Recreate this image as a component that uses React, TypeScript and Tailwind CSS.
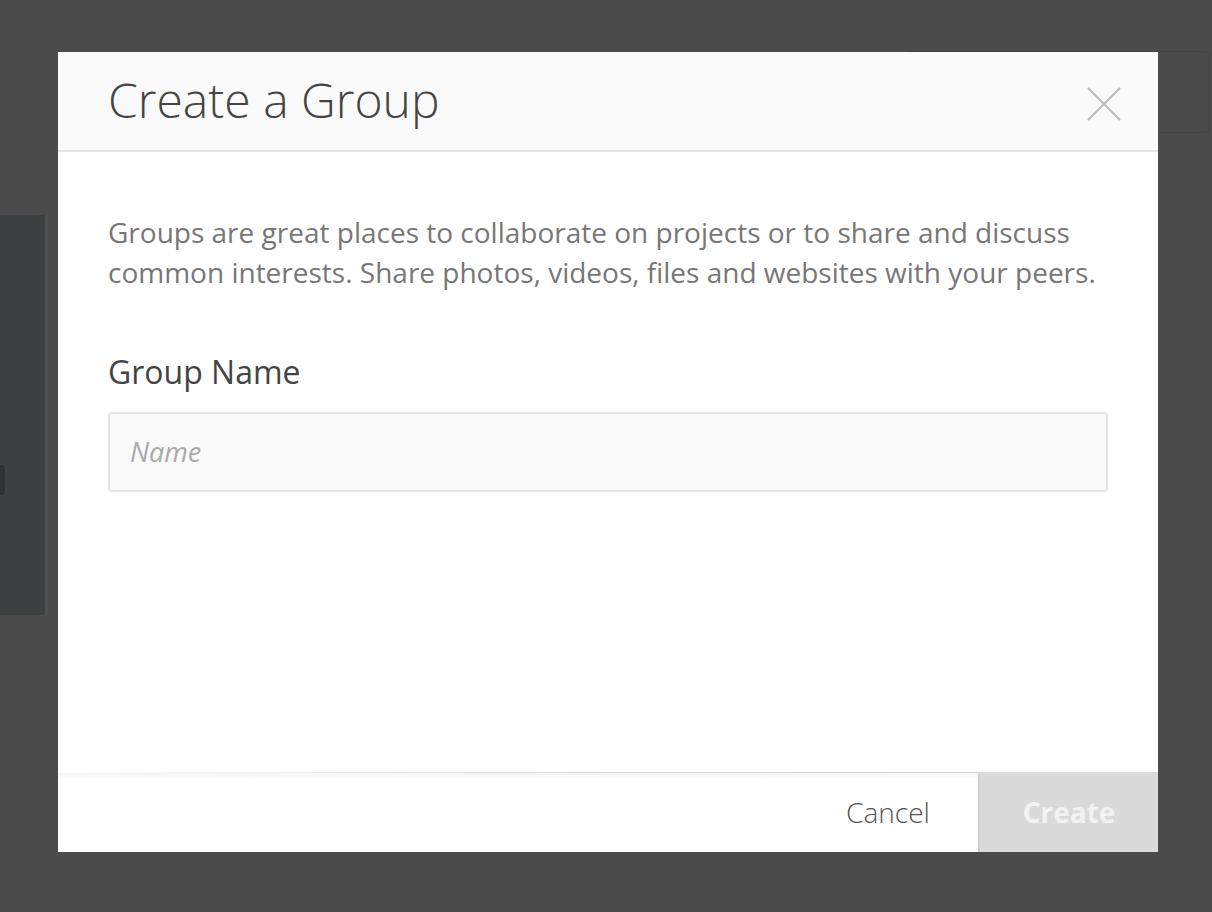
import React from "react";

export default function App() {
  const font = { fontFamily: '"Open Sans", "Liberation Sans", sans-serif' };
  return (
    <div className="relative w-[1212px] h-[912px] overflow-hidden bg-[#4b4b4b]" style={font}>
      {/* background page, dimmed */}
      <div className="absolute left-0 top-[215px] w-[45px] h-[400px] bg-[#3e4142]">
        <div className="absolute left-0 top-[250px] w-[5px] h-[30px] bg-[#2e3233] rounded-r-sm" />
      </div>
      <div className="absolute left-[45px] top-[215px] w-[3px] h-[400px] bg-[#505050]" />
      <div className="absolute left-[905px] top-[51px] w-[305px] h-[82px] rounded-[5px] border border-[#444444] bg-[#4a4a4a]" />

      <div className="relative pt-[52px] pl-[58px]">
        <div className="flex flex-col w-[1100px] h-[800px] bg-white">
          <div className="flex items-center justify-between h-[100px] bg-[#fafafa] border-b-2 border-[#e3e3e3] pl-[50px] pr-[37px]">
            <h1 className="text-[48px] font-light text-[#444444] leading-none pb-[2px]">Create a Group</h1>
            <svg width="34" height="34" viewBox="0 0 34 34" className="mt-[6px]">
              <path d="M1 1 L33 33 M33 1 L1 33" stroke="#bdbdbd" strokeWidth="2.2" />
            </svg>
          </div>
          <div className="flex-1 px-[50px] pt-[60px]">
            <p className="text-[28px] leading-[40px] text-[#777777]">
              Groups are great places to collaborate on projects or to share and discuss common interests. Share photos, videos, files and websites with your peers.
            </p>
            <label className="block mt-[60px] text-[32px] leading-[40px] text-[#444444]">Group Name</label>
            <div className="mt-[20px] w-[1000px] h-[80px] rounded-[4px] border-2 border-[#e5e5e5] bg-[#fafafa] flex items-center px-[20px]">
              <span className="italic text-[27px] text-[#aaaaaa]">Name</span>
            </div>
          </div>
          <div className="relative flex h-[80px] justify-end">
            <div className="absolute left-0 right-0 top-0 h-[1px] bg-gradient-to-r from-transparent via-[#d8d8d8] to-[#cccccc]" />
            <div className="absolute left-0 right-0 top-[1px] h-[6px] bg-gradient-to-b from-[#f0f0f0] to-white opacity-70" />
            <div className="relative flex items-center justify-center w-[180px] text-[28px] font-light text-[#555555]">Cancel</div>
            <div className="relative flex items-center justify-center w-[180px] bg-[#dadada] border-l-2 border-[#d0d0d0] text-[28px] font-bold text-[#f2f2f2]">Create</div>
          </div>
        </div>
      </div>
    </div>
  );
}
